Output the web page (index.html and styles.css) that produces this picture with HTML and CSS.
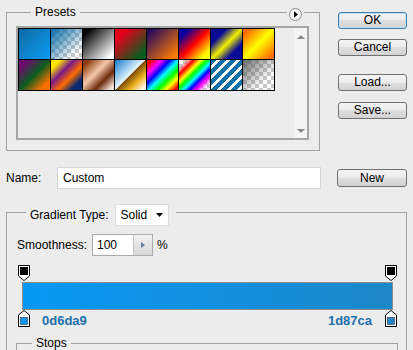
FILE: index.html
```html
<!DOCTYPE html>
<html>
<head>
<meta charset="utf-8">
<link rel="stylesheet" href="styles.css">
</head>
<body>
<div class="dialog">
  <div class="top">
    <div class="presets-wrap">
      <fieldset class="group presets">
        <legend>Presets</legend>
        <div class="list">
          <div class="swatches">
            <div class="sw s1"></div>
            <div class="sw s2 checker"></div>
            <div class="sw s3"></div>
            <div class="sw s4"></div>
            <div class="sw s5"></div>
            <div class="sw s6"></div>
            <div class="sw s7"></div>
            <div class="sw s8"></div>
            <div class="sw s9"></div>
            <div class="sw s10"></div>
            <div class="sw s11"></div>
            <div class="sw s12"></div>
            <div class="sw s13"></div>
            <div class="sw s14 checker"></div>
            <div class="sw s15"></div>
            <div class="sw s16 checker"></div>
          </div>
          <div class="scrollbar">
            <span class="arr up"></span>
            <span class="arr down"></span>
          </div>
        </div>
      </fieldset>
      <span class="menu-btn">
        <svg width="13" height="13" viewBox="0 0 13 13"><circle cx="6.5" cy="6.5" r="6" fill="#f4f4f4" stroke="#8c8c8c"/><polygon points="5,3.2 9,6.5 5,9.8" fill="#000"/></svg>
      </span>
    </div>
    <div class="buttons">
      <button class="btn default">OK</button>
      <button class="btn cancel">Cancel</button>
      <button class="btn load">Load...</button>
      <button class="btn save">Save...</button>
    </div>
  </div>

  <div class="name-row">
    <span class="name-label">Name:</span>
    <div class="text-input">Custom</div>
    <button class="btn new">New</button>
  </div>

  <fieldset class="group gradient">
    <legend class="type-legend">
      <span class="type-label">Gradient Type:</span>
      <span class="select">Solid<svg width="7" height="4" viewBox="0 0 7 4"><polygon points="0,0 7,0 3.5,4" fill="#000"/></svg></span>
    </legend>
    <div class="smooth-row">
      <span class="smooth-label">Smoothness:</span>
      <span class="num-input"><span class="num-value">100</span><span class="spin"><svg width="4" height="6" viewBox="0 0 4 6"><polygon points="0,0 4,3 0,6" fill="#6a7ea6"/></svg></span></span>
      <span class="pct">%</span>
    </div>
    <div class="stops-area">
      <div class="marker-row">
        <svg class="marker" width="12" height="16" viewBox="0 0 12 16"><path d="M0.5 0.5H11.5V11L6 15.5L0.5 11Z" fill="#fff" stroke="#000"/><rect x="2" y="2" width="8" height="8" fill="#000"/></svg>
        <svg class="marker" width="12" height="16" viewBox="0 0 12 16"><path d="M0.5 0.5H11.5V11L6 15.5L0.5 11Z" fill="#fff" stroke="#000"/><rect x="2" y="2" width="8" height="8" fill="#000"/></svg>
      </div>
      <div class="bar"></div>
      <div class="color-row">
        <svg class="marker" width="12" height="17" viewBox="0 0 12 17"><path d="M6 0.5L11.5 5V16.5H0.5V5Z" fill="#fff" stroke="#000"/><rect x="2.5" y="7.5" width="7" height="7" fill="#0a9af5" stroke="#333" stroke-width="0.6"/></svg>
        <span class="hex left">0d6da9</span>
        <span class="hex right">1d87ca</span>
        <svg class="marker" width="12" height="17" viewBox="0 0 12 17"><path d="M6 0.5L11.5 5V16.5H0.5V5Z" fill="#fff" stroke="#000"/><rect x="2.5" y="7.5" width="7" height="7" fill="#1d87ca" stroke="#333" stroke-width="0.6"/></svg>
      </div>
      <fieldset class="group stops">
        <legend>Stops</legend>
      </fieldset>
    </div>
  </fieldset>
</div>
</body>
</html>
```
FILE: styles.css
```css
html, body {
  margin: 0;
  padding: 0;
  background: #ececec;
  width: 413px;
  height: 350px;
  overflow: hidden;
}
body {
  font-family: "Liberation Sans", Arial, sans-serif;
  font-size: 12px;
  color: #000;
}
.dialog {
  padding: 0 6px;
}
.group {
  margin: 0;
  padding: 0;
  border: 1px solid #a0a0a0;
  min-width: 0;
}
.group > legend {
  padding: 0 4px;
  margin-left: 15px;
  line-height: 12px;
  height: 12px;
}

/* top section */
.top {
  display: flex;
  padding-top: 6px;
}
.presets-wrap {
  position: relative;
  width: 314px;
}
.presets {
  padding: 0 0 10px 9px;
}
.list {
  margin-top: 8px;
  width: 293px;
  height: 114px;
  box-sizing: border-box;
  border: 2px solid #a6a6a6;
  display: flex;
  justify-content: space-between;
}
.swatches {
  align-self: flex-start;
  display: grid;
  grid-template-columns: repeat(8, 31px);
  grid-auto-rows: 30px;
  gap: 1px;
  padding: 1px;
  background: #000;
}
.scrollbar {
  width: 13px;
  background: #f4f4f4;
  display: flex;
  flex-direction: column;
  justify-content: space-between;
  align-items: center;
  padding: 7px 0 5px;
  box-sizing: border-box;
}
.arr {
  width: 0;
  height: 0;
  border-left: 4px solid transparent;
  border-right: 4px solid transparent;
}
.arr.up { border-bottom: 4px solid #8a8a8a; }
.arr.down { border-top: 4px solid #8a8a8a; }
.menu-btn {
  position: absolute;
  left: 281px;
  top: 0;
  padding: 2px;
  background: #ececec;
  display: block;
  line-height: 0;
}

.checker {
  background-color: #fff;
}
.sw { display: block; }
.s1 { background: linear-gradient(135deg, #0f6aa6, #0a9cf2); }
.s2 {
  background:
    linear-gradient(135deg, #0d6da9 0%, rgba(13,109,169,0.6) 35%, rgba(13,109,169,0) 80%),
    conic-gradient(#c8c8c8 25%, #fff 0 50%, #c8c8c8 0 75%, #fff 0) 0 0 / 8px 8px;
}
.s3 { background: linear-gradient(135deg, #000 10%, #fff 90%); }
.s4 { background: linear-gradient(135deg, #e4001b 20%, #0a5c1e 85%); }
.s5 { background: linear-gradient(135deg, #2a0c5c 10%, #ff7c00 90%); }
.s6 { background: linear-gradient(135deg, #0000a0 15%, #ff0000 50%, #ffff00 85%); }
.s7 { background: linear-gradient(135deg, #0a0a96 25%, #f2f000 50%, #0a0a96 75%); }
.s8 { background: linear-gradient(135deg, #ff6a00 10%, #ffff00 50%, #ff7000 90%); }
.s9 { background: linear-gradient(135deg, #6c0c6e 15%, #0b5e1e 50%, #ff7000 85%); }
.s10 { background: linear-gradient(135deg, #ffe800 15%, #7a1a8a 38%, #ff6a00 60%, #0a2a70 82%); }
.s11 { background: linear-gradient(135deg, #8c3c0e 10%, #f5c8aa 42%, #6e2a0c 68%, #f2e2d8 92%); }
.s12 { background: linear-gradient(135deg, #2a88d0 5%, #e8f6ff 49%, #7a4a00 50%, #f0b020 72%, #ffffff 95%); }
.s13 { background: linear-gradient(135deg, #ff0000 8%, #ff00ff 24%, #0000ff 38%, #00ffff 52%, #00ff00 66%, #ffff00 80%, #ff0000 94%); }
.s14 {
  background:
    linear-gradient(135deg, rgba(255,0,0,0) 12%, #ff0000 24%, #ffff00 36%, #00ff00 46%, #00ffff 56%, #0000ff 66%, #ff00ff 76%, rgba(255,0,255,0) 90%),
    conic-gradient(#c8c8c8 25%, #fff 0 50%, #c8c8c8 0 75%, #fff 0) 0 0 / 8px 8px;
}
.s15 { background: repeating-linear-gradient(135deg, #1070a8 0 4px, #fff 4px 7px); }
.s16 {
  background:
    linear-gradient(135deg, rgba(90,90,90,0.9) 0%, rgba(90,90,90,0) 70%),
    conic-gradient(#c8c8c8 25%, #fff 0 50%, #c8c8c8 0 75%, #fff 0) 0 0 / 8px 8px;
}

.buttons {
  margin-left: 18px;
  width: 69px;
  padding-top: 6px;
  display: flex;
  flex-direction: column;
}
.btn {
  font-family: "Liberation Sans", Arial, sans-serif;
  font-size: 12px;
  color: #000;
  height: 17px;
  width: 69px;
  padding: 0;
  line-height: 15px;
  border: 1px solid #707070;
  border-radius: 3px;
  background: linear-gradient(#f4f4f4 0%, #ececec 50%, #dfdfdf 50%, #d2d2d2 100%);
  text-align: center;
  box-sizing: border-box;
}
.btn.default {
  border-color: #3c7fb1;
  box-shadow: inset 0 0 0 1px #bfe3f6;
}
.btn.cancel { margin-top: 10px; }
.btn.load { margin-top: 18px; }
.btn.save { margin-top: 11px; }

/* name row */
.name-row {
  margin-top: 16px;
  display: flex;
  align-items: center;
  height: 22px;
}
.name-label {
  width: 51px;
}
.text-input {
  width: 264px;
  height: 22px;
  box-sizing: border-box;
  background: #fff;
  border: 1px solid #d6d6d6;
  padding-left: 5px;
  line-height: 20px;
}
.btn.new {
  margin-left: 16px;
  width: 70px;
  height: 18px;
  line-height: 16px;
}

/* gradient fieldset */
.gradient {
  margin-top: 15px;
  width: 401px;
  box-sizing: border-box;
  padding-bottom: 60px;
}
.gradient > legend.type-legend {
  margin-left: 19px;
  padding: 0 7px 0 4px;
  height: 17px;
  line-height: 22px;
  display: flex;
  align-items: flex-start;
}
.type-label {
  height: 22px;
  line-height: 22px;
}
.select {
  margin-left: 6px;
  width: 54px;
  height: 22px;
  box-sizing: border-box;
  background: #fff;
  border: 1px solid #dcdcdc;
  padding-left: 5px;
  padding-right: 5px;
  display: flex;
  align-items: center;
  justify-content: space-between;
  line-height: 20px;
}
.smooth-row {
  margin-top: 13px;
  margin-left: 10px;
  display: flex;
  align-items: center;
  height: 22px;
}
.smooth-label {
  width: 75px;
}
.num-input {
  width: 61px;
  height: 22px;
  box-sizing: border-box;
  border: 1px solid #ababab;
  background: #fff;
  display: flex;
}
.num-value {
  flex: 1;
  padding-left: 4px;
  line-height: 20px;
}
.spin {
  width: 18px;
  border-left: 1px solid #c4c4c4;
  background: linear-gradient(#f2f2f2, #d6d6d6);
  display: flex;
  align-items: center;
  justify-content: center;
}
.pct {
  margin-left: 4px;
}
.stops-area {
  margin-top: 9px;
  margin-left: 11px;
  width: 379px;
}
.marker-row {
  display: flex;
  justify-content: space-between;
  height: 16px;
}
.marker { display: block; }
.bar {
  margin-top: 1px;
  margin-left: 4px;
  width: 371px;
  height: 28px;
  box-sizing: border-box;
  border: 1px solid #8e8e8e;
  background: linear-gradient(to right, #0899f5, #1d87ca);
}
.color-row {
  display: flex;
  align-items: center;
  height: 17px;
}
.hex {
  font-weight: bold;
  font-size: 13px;
  color: #1b6fad;
  line-height: 17px;
  padding-top: 4px;
}
.hex.left { margin-left: 12px; }
.hex.right { margin-left: auto; margin-right: 13px; }
.stops {
  margin-top: 10px;
  margin-left: -2px;
  width: 382px;
  box-sizing: border-box;
  height: 60px;
}
```
